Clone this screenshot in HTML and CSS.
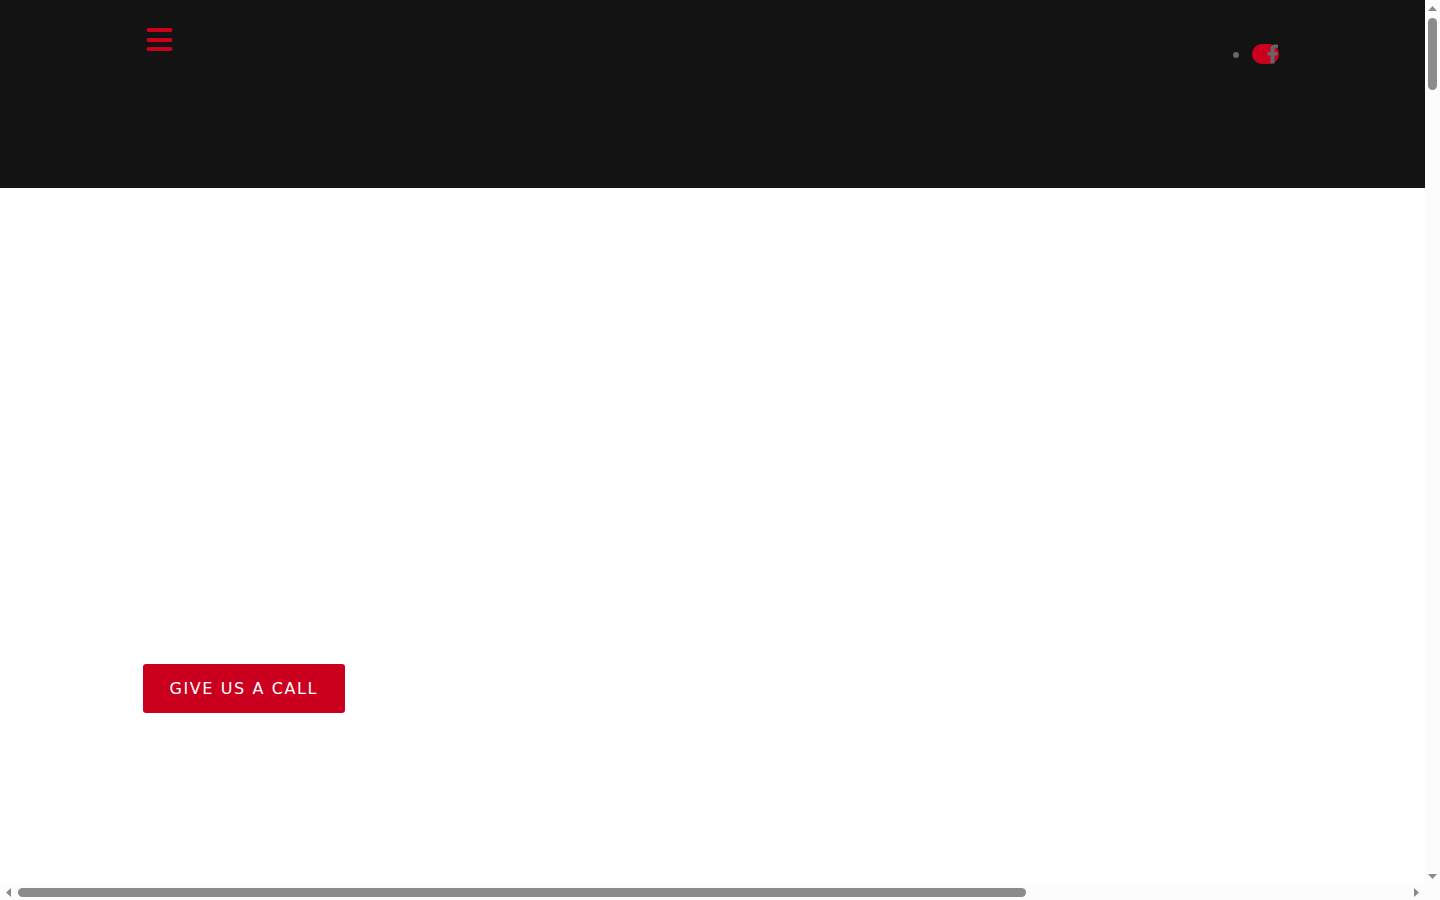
FILE: index.html
```html
<!DOCTYPE html>
<html lang="en">
<head>
    <meta charset="UTF-8">
    <meta name="viewport" content="width=device-width, initial-scale=1.0">
    <title>Give Us a Call</title>
    <link rel="stylesheet" href="styles.css">
</head>
<body>
    <div class="viewport">
        <div class="page">
            <header class="header">
                <button class="menu-button" aria-label="Menu">
                    <svg width="27" height="24" viewBox="0 0 27 24">
                        <path d="M2.500 2H24.500M2.500 12H24.500M2.500 21H24.500" fill="none" stroke="currentColor" stroke-width="4" stroke-linecap="round"/>
                    </svg>
                </button>
                <ul class="social">
                    <li>
                        <a href="#" class="social-link" aria-label="Facebook">
                            <svg width="12" height="20" viewBox="0 0 12 20">
                                <path d="M3.500 19.500V11.500H0.500V8H3.500V5.500C3.500 2 5.500 0.500 8.500 0.500L11 0.700V3.700H9.500C8 3.700 7.500 4.500 7.500 5.500V8H10.700L10.200 11.500H7.500V19.500Z" fill="currentColor"/>
                            </svg>
                        </a>
                    </li>
                </ul>
            </header>
            <main class="hero">
                <a href="#" class="call-button">GIVE US A CALL</a>
            </main>
        </div>
        <div class="scrollbar scrollbar-y">
            <svg width="9" height="5" viewBox="0 0 9 5"><path d="M0 5L4.500 0L9 5Z"/></svg>
            <div class="track"><div class="thumb"></div></div>
            <svg width="9" height="5" viewBox="0 0 9 5"><path d="M0 0H9L4.500 5Z"/></svg>
        </div>
        <div class="scrollbar scrollbar-x">
            <svg width="5" height="9" viewBox="0 0 5 9"><path d="M5 0V9L0 4.500Z"/></svg>
            <div class="track"><div class="thumb"></div></div>
            <svg width="5" height="9" viewBox="0 0 5 9"><path d="M0 0V9L5 4.500Z"/></svg>
        </div>
        <div class="corner"></div>
    </div>
</body>
</html>
```
FILE: styles.css
```css
* {
    box-sizing: border-box;
}
body {
    margin: 0;
    background-color: #fff;
    color: #666;
    font-family: "DejaVu Sans", sans-serif;
    font-size: 16px;
}
.viewport {
    display: grid;
    grid-template-columns: 1fr 15px;
    grid-template-rows: 1fr 15px;
    height: 100vh;
}
.page {
    overflow: hidden;
}
.header {
    display: flex;
    justify-content: space-between;
    align-items: flex-start;
    height: 188px;
    padding: 28px 10% 0;
    background-color: #131313;
}
.menu-button {
    display: flex;
    margin: 0;
    padding: 0 3px;
    background: none;
    border: none;
    color: #cb001e;
    cursor: pointer;
}
.social {
    margin: 16px 4px 0 0;
    padding: 0;
    list-style: none;
}
.social li {
    display: flex;
    align-items: center;
    gap: 13px;
}
.social li::before {
    content: "";
    width: 6px;
    height: 6px;
    margin-top: 2px;
    background-color: #666;
    border-radius: 50%;
}
.social-link {
    display: flex;
    justify-content: flex-end;
    width: 27px;
    height: 20px;
    background-color: #cb001e;
    border-radius: 10px;
    color: #666;
}
.hero {
    padding: 476px 10% 0;
}
.call-button {
    display: inline-block;
    padding: 0 27px;
    background-color: #cb001e;
    border-radius: 3px;
    color: #fff;
    letter-spacing: 0.1em;
    line-height: 49px;
    text-decoration: none;
}
.scrollbar {
    display: flex;
    align-items: center;
    gap: 7px;
    background-color: #fcfcfc;
    fill: #8b8b8b;
}
.scrollbar-y {
    flex-direction: column;
    padding: 6px 0;
}
.scrollbar-x {
    padding: 0 6px;
}
.track {
    flex: 1;
}
.thumb {
    background-color: #8b8b8b;
    border-radius: 5px;
}
.scrollbar-y .thumb {
    width: 9px;
    height: 72px;
}
.scrollbar-x .thumb {
    width: 72.6%;
    height: 9px;
}
.corner {
    background-color: #fcfcfc;
}
```
